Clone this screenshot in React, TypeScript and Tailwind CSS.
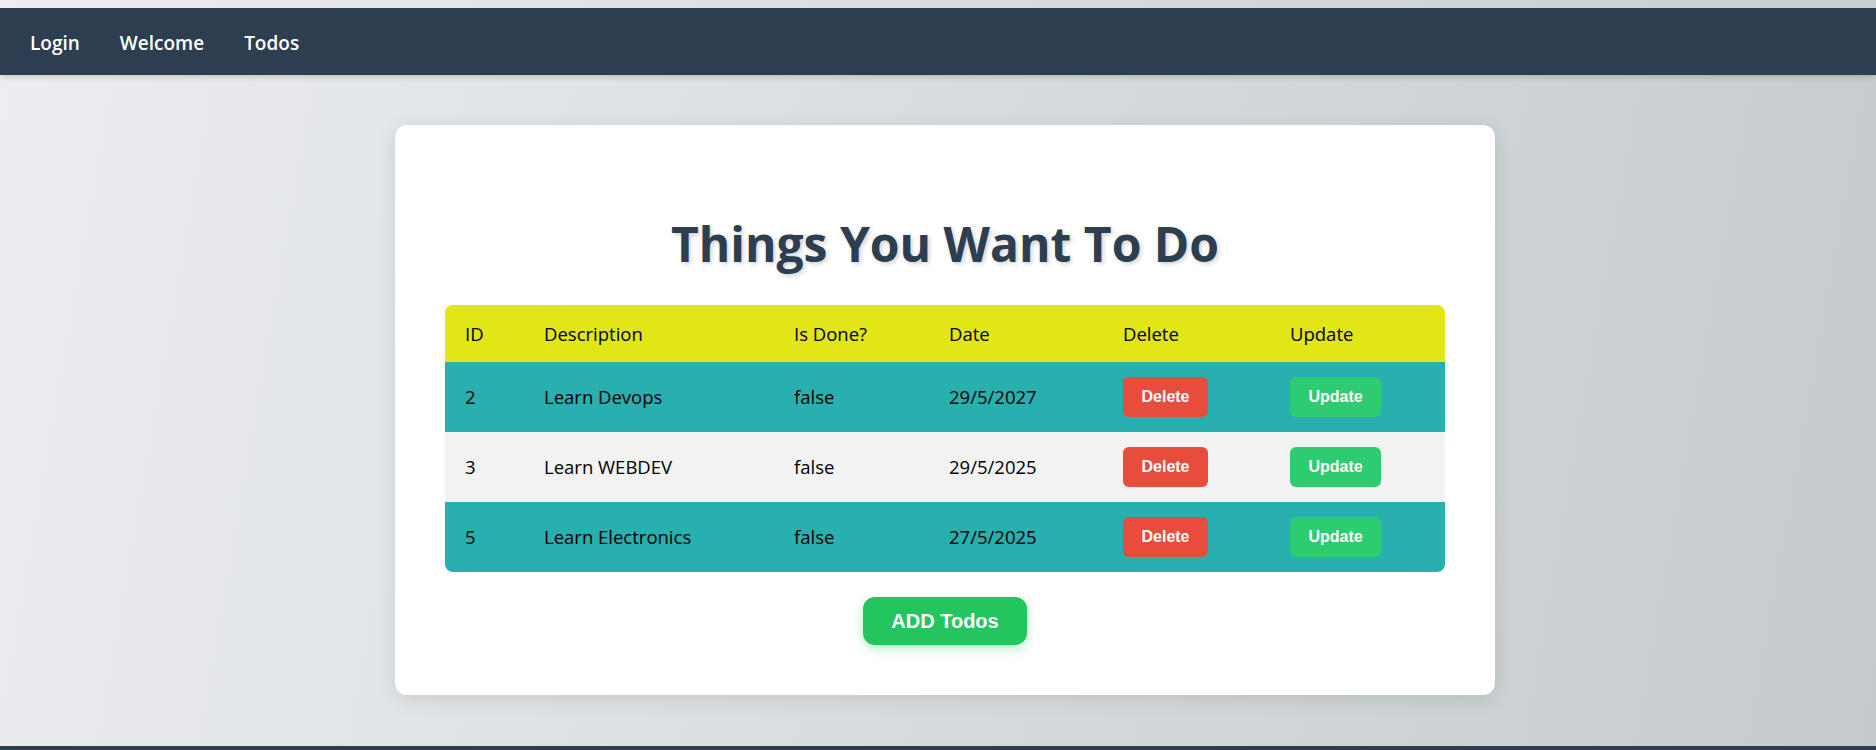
import React from 'react';

interface Todo {
  id: number;
  description: string;
  done: boolean;
  date: string;
}

const todos: Todo[] = [
  { id: 2, description: 'Learn Devops', done: false, date: '29/5/2027' },
  { id: 3, description: 'Learn WEBDEV', done: false, date: '29/5/2025' },
  { id: 5, description: 'Learn Electronics', done: false, date: '27/5/2025' },
];

const cols = 'grid grid-cols-[79px_250px_155px_174px_167px_1fr] items-center';

function Navbar() {
  return (
    <nav className="mt-2 h-[67px] bg-[#2c3e50] shadow-md flex items-center px-[10px] pt-[4px]">
      {['Login', 'Welcome', 'Todos'].map(link => (
        <a key={link} href="#" className="px-5 text-white text-[19px] font-semibold">
          {link}
        </a>
      ))}
    </nav>
  );
}

function TodoTable() {
  return (
    <div className="rounded-lg overflow-hidden text-[18.5px] text-black">
      <div className={`${cols} h-[57px] bg-[#e2e516] px-5`}>
        <div>ID</div>
        <div>Description</div>
        <div>Is Done?</div>
        <div>Date</div>
        <div>Delete</div>
        <div>Update</div>
      </div>
      {todos.map((todo, i) => (
        <div
          key={todo.id}
          className={`${cols} h-[70px] px-5 ${i % 2 === 0 ? 'bg-[#27b0ae]' : 'bg-[#f2f2f2]'}`}
        >
          <div>{todo.id}</div>
          <div>{todo.description}</div>
          <div>{todo.done.toString()}</div>
          <div>{todo.date}</div>
          <div>
            <button className="w-[85px] h-10 rounded-md bg-[#e74c3c] text-white font-bold text-[16px] [font-family:'Liberation_Sans',Arial,sans-serif]">
              Delete
            </button>
          </div>
          <div>
            <button className="w-[91px] h-10 rounded-md bg-[#2ecc71] text-white font-bold text-[16px] [font-family:'Liberation_Sans',Arial,sans-serif]">
              Update
            </button>
          </div>
        </div>
      ))}
    </div>
  );
}

export default function App() {
  return (
    <div className="bg-[linear-gradient(100deg,#eceef1_0%,#c4cacd_100%)] [font-family:'Open_Sans','Noto_Sans',sans-serif] flex flex-col">
      <Navbar />

      <main className="flex justify-center pt-[50px] pb-[51px] pl-[14px]">
        <div className="w-[1100px] h-[570px] bg-white rounded-xl shadow-[0_4px_20px_rgba(0,0,0,0.1)] px-[50px] pt-[50px] pb-[50px] flex flex-col">
          <h1 className="text-center text-[48px] font-bold text-[#2c3e50] leading-none mt-[45px] mb-[37px] [text-shadow:2px_2px_4px_rgba(0,0,0,0.18)]">
            Things You Want To Do
          </h1>

          <TodoTable />

          <div className="flex justify-center mt-[25px]">
            <button className="w-[164px] h-12 rounded-xl bg-[#22c55e] text-white font-bold text-[20px] shadow-[0_4px_12px_rgba(34,197,94,0.3)] [font-family:'Liberation_Sans',Arial,sans-serif]">
              ADD Todos
            </button>
          </div>
        </div>
      </main>

      <footer className="h-16 bg-[#2c3e50]" />
    </div>
  );
}
